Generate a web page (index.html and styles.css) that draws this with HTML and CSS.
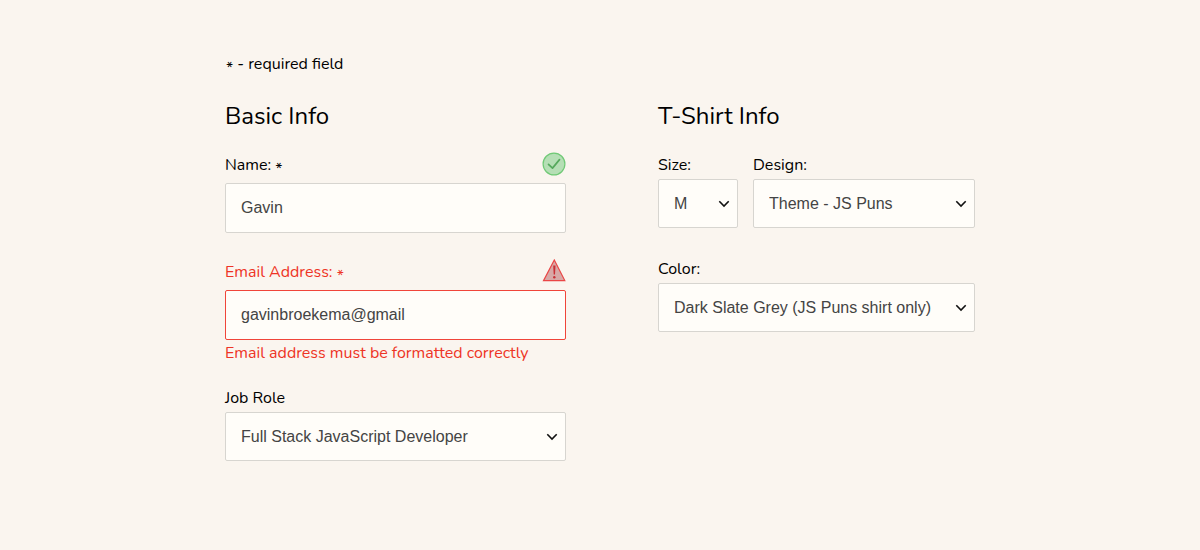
FILE: index.html
```html
<!DOCTYPE html>
<html lang="en">
<head>
<meta charset="utf-8">
<meta name="viewport" content="width=device-width, initial-scale=1">
<title>Registration</title>
<link rel="stylesheet" href="styles.css">
</head>
<body>
<form class="form" novalidate>
  <p class="note"><span class="star">*</span> - required field</p>
  <div class="columns">
    <section class="column basic">
      <h2 class="title">Basic Info</h2>
      <div class="field">
        <div class="label-row">
          <label for="name">Name: <span class="star">*</span></label>
          <svg class="status" viewBox="0 0 24 24" aria-hidden="true"><circle cx="12" cy="12" r="10.9" fill="#b5dfb5" stroke="#70c976" stroke-width="1.2"/><path d="M6.5 12.4l4 3.7 7-8.5" fill="none" stroke="#55a95c" stroke-width="1.7" stroke-linecap="round" stroke-linejoin="round"/></svg>
        </div>
        <input class="control" id="name" type="text" value="Gavin">
      </div>
      <div class="field invalid">
        <div class="label-row">
          <label for="email">Email Address: <span class="star">*</span></label>
          <svg class="status" viewBox="0 0 24 24" aria-hidden="true"><path d="M12.3 1L22.8 21.6H1.5Z" fill="#d8a8a6" stroke="#ea4646" stroke-width="1.2"/><path d="M11.2 6.4h2.3l-.5 9.2h-1.3Z" fill="#c92f35"/><circle cx="12.3" cy="18.2" r="1.2" fill="#c92f35"/></svg>
        </div>
        <input class="control" id="email" type="email" value="gavinbroekema@gmail" aria-invalid="true" aria-describedby="email-hint">
        <p class="hint" id="email-hint">Email address must be formatted correctly</p>
      </div>
      <div class="field">
        <label for="role">Job Role</label>
        <div class="select">
          <select class="control" id="role"><option>Full Stack JavaScript Developer</option></select>
          <svg class="arrow" viewBox="0 0 12 8" aria-hidden="true"><path d="M1.3 1.3L6 6l4.7-4.7"/></svg>
        </div>
      </div>
    </section>
    <section class="column shirt">
      <h2 class="title">T-Shirt Info</h2>
      <div class="pair">
        <div class="field">
          <label for="size">Size:</label>
          <div class="select">
            <select class="control" id="size"><option>M</option></select>
            <svg class="arrow" viewBox="0 0 12 8" aria-hidden="true"><path d="M1.3 1.3L6 6l4.7-4.7"/></svg>
          </div>
        </div>
        <div class="field">
          <label for="design">Design:</label>
          <div class="select">
            <select class="control" id="design"><option>Theme - JS Puns</option></select>
            <svg class="arrow" viewBox="0 0 12 8" aria-hidden="true"><path d="M1.3 1.3L6 6l4.7-4.7"/></svg>
          </div>
        </div>
      </div>
      <div class="field">
        <label for="color">Color:</label>
        <div class="select">
          <select class="control" id="color"><option>Dark Slate Grey (JS Puns shirt only)</option></select>
          <svg class="arrow" viewBox="0 0 12 8" aria-hidden="true"><path d="M1.3 1.3L6 6l4.7-4.7"/></svg>
        </div>
      </div>
    </section>
  </div>
</form>
</body>
</html>
```

FILE: styles.css
```css
* {
  box-sizing: border-box;
}

body {
  margin: 0;
  background: #faf5ef;
  color: #000000;
  font: 16px/24px Nunito, Lato, sans-serif;
}

.form {
  max-width: 782px;
  margin: 0 auto;
  padding: 52px 16px 88px;
}

.note {
  margin: 0 0 24px 1px;
}

.star {
  font-size: 16px;
  line-height: 1;
  vertical-align: -4px;
}

.columns {
  display: grid;
  grid-template-columns: 341fr 317fr;
  column-gap: 92px;
}

.column {
  display: flex;
  flex-direction: column;
  min-width: 0;
}

.basic {
  gap: 26px;
}

.shirt {
  gap: 29px;
}

.title {
  margin: 0;
  height: 26px;
  font-size: 24px;
  line-height: 32px;
  font-weight: 400;
}

.shirt .title {
  height: 24px;
}

.field {
  display: flex;
  flex-direction: column;
  gap: 2px;
  min-width: 0;
}

.label-row {
  display: flex;
  justify-content: space-between;
  height: 24px;
  margin-bottom: 5px;
  line-height: 26px;
}

.status {
  width: 24px;
  height: 24px;
}

.pair {
  display: grid;
  grid-template-columns: 80fr 222fr;
  gap: 15px;
}

.control {
  appearance: none;
  width: 100%;
  height: 50px;
  margin: 0;
  padding: 0 15px;
  border: 1px solid #d7d5d0;
  border-radius: 2px;
  background: #fffdf9;
  color: #444444;
  font: 16px "Liberation Sans", Arial, sans-serif;
}

.select {
  display: grid;
  align-items: center;
}

.select > * {
  grid-area: 1 / 1;
}

.select .control {
  height: 49px;
}

.arrow {
  justify-self: end;
  width: 12px;
  height: 8px;
  margin-right: 8px;
  fill: none;
  stroke: #111111;
  stroke-width: 1.6;
  pointer-events: none;
}

.invalid {
  color: #ee3425;
}

.invalid .control {
  border: 1px solid #f0453a;
}

.hint {
  margin: -1px 0 -5px;
}

@media (max-width: 700px) {
  .columns {
    grid-template-columns: 1fr;
    row-gap: 32px;
  }
}
```
